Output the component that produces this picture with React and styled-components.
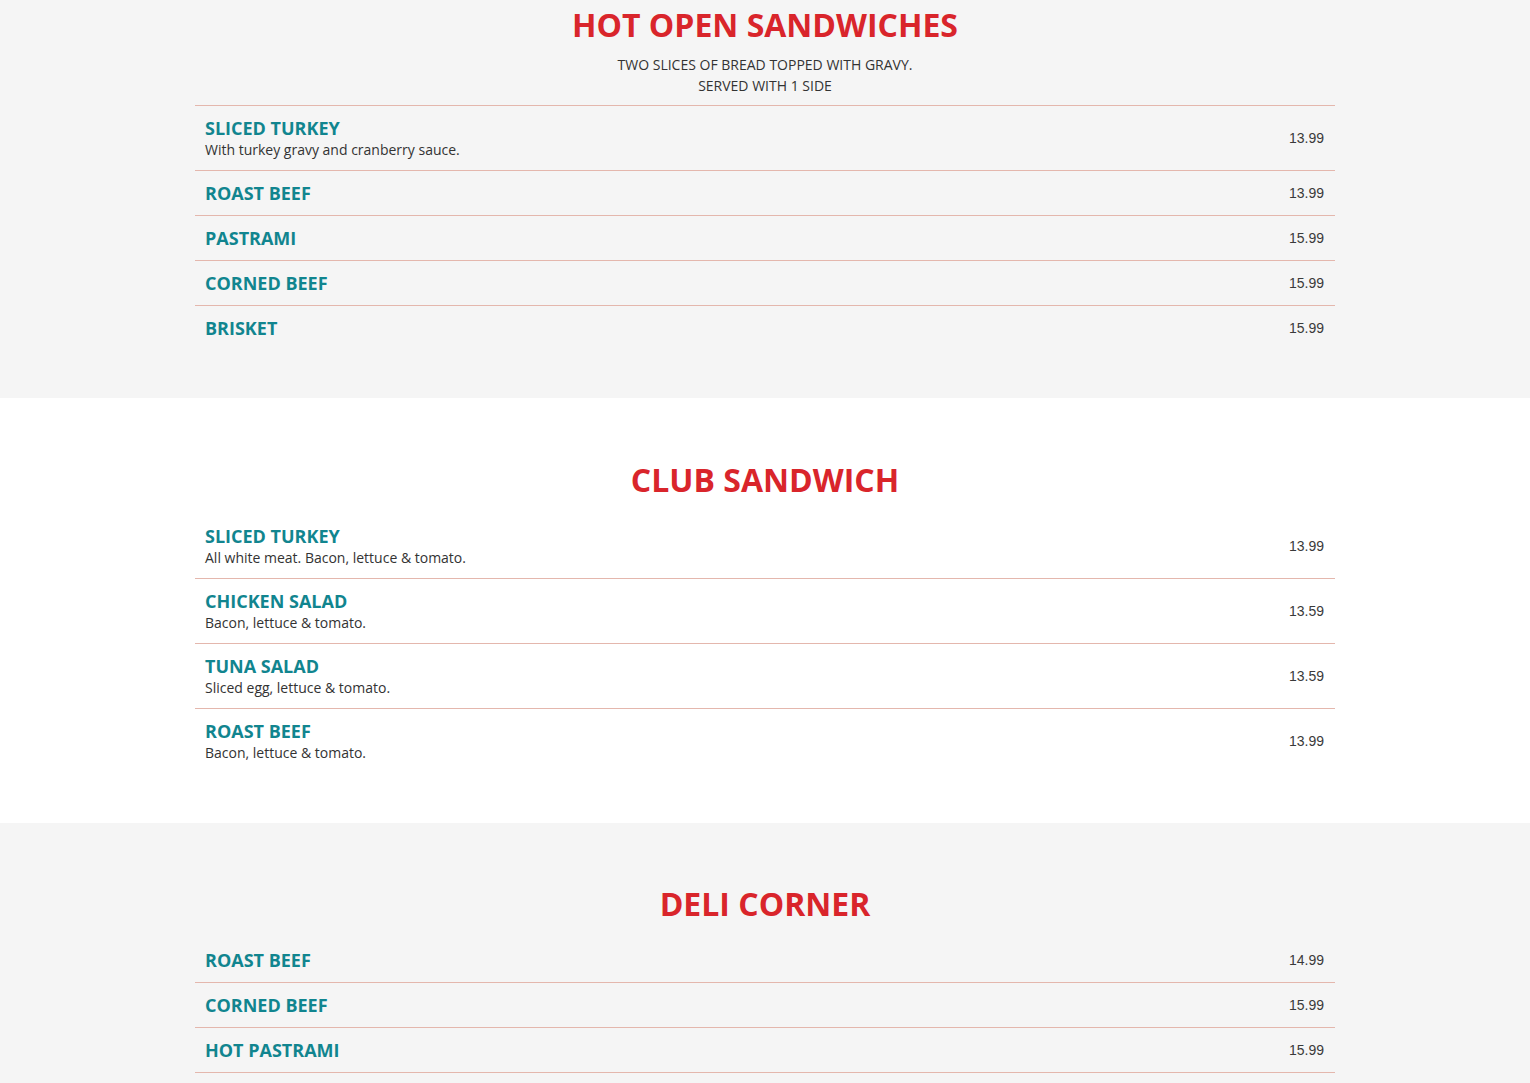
import React from "react";
import styled, { createGlobalStyle } from "styled-components";

const Global = createGlobalStyle`
  html, body { margin: 0; padding: 0; background: #ffffff; }
  body { font-family: "Open Sans", "Liberation Sans", sans-serif; color: #333; }
  * { box-sizing: border-box; }
`;

const Section = styled.section`
  background: ${(p) => (p.$alt ? "#f5f5f5" : "#ffffff")};
  padding: ${(p) => p.$top}px 0 ${(p) => p.$bottom}px;
`;

const Container = styled.div`
  width: 1140px;
  margin: 0 auto;
`;

const Title = styled.h2`
  margin: 0 0 ${(p) => (p.$hasSub ? 11 : 16)}px;
  font-family: "Open Sans", sans-serif;
  font-weight: 700;
  font-size: 32px;
  line-height: 36px;
  color: #d9252b;
  text-align: center;
  text-transform: uppercase;
`;

const Subtitle = styled.div`
  font-size: 14px;
  line-height: 21px;
  text-align: center;
  text-transform: uppercase;
  color: #333;
  padding-bottom: 9px;
  border-bottom: 1px solid #e4b7ad;
`;

const List = styled.ul`
  list-style: none;
  margin: 0;
  padding: 0;
`;

const Item = styled.li`
  display: flex;
  align-items: center;
  justify-content: space-between;
  padding: 10px 11px 10px 10px;
  border-bottom: 1px solid #e4b7ad;
  &:last-child { border-bottom: none; }
`;

const Info = styled.div`
  display: flex;
  flex-direction: column;
`;

const Name = styled.div`
  font-weight: 700;
  font-size: 18px;
  line-height: 24px;
  color: #11858f;
  text-transform: uppercase;
`;

const Desc = styled.div`
  font-size: 14px;
  line-height: 20px;
  color: #333;
`;

const Price = styled.div`
  font-family: "Liberation Sans", Arial, sans-serif;
  font-size: 14px;
  color: #3a3a3a;
`;

const sections = [
  {
    title: "Hot Open Sandwiches",
    alt: true,
    top: 7,
    bottom: 48,
    sub: ["Two slices of bread topped with gravy.", "Served with 1 side"],
    items: [
      ["Sliced Turkey", "With turkey gravy and cranberry sauce.", "13.99"],
      ["Roast Beef", null, "13.99"],
      ["Pastrami", null, "15.99"],
      ["Corned Beef", null, "15.99"],
      ["Brisket", null, "15.99"],
    ],
  },
  {
    title: "Club Sandwich",
    alt: false,
    top: 64,
    bottom: 50,
    items: [
      ["Sliced Turkey", "All white meat. Bacon, lettuce & tomato.", "13.99"],
      ["Chicken Salad", "Bacon, lettuce & tomato.", "13.59"],
      ["Tuna Salad", "Sliced egg, lettuce & tomato.", "13.59"],
      ["Roast Beef", "Bacon, lettuce & tomato.", "13.99"],
    ],
  },
  {
    title: "Deli Corner",
    alt: true,
    top: 63,
    bottom: 50,
    items: [
      ["Roast Beef", null, "14.99"],
      ["Corned Beef", null, "15.99"],
      ["Hot Pastrami", null, "15.99"],
      ["Turkey Breast", null, "14.99"],
      ["Brisket", null, "15.99"],
    ],
  },
];

export default function App() {
  return (
    <>
      <Global />
      {sections.map((s) => (
        <Section key={s.title} $alt={s.alt} $top={s.top} $bottom={s.bottom}>
          <Container>
            <Title $hasSub={!!s.sub}>{s.title}</Title>
            {s.sub && (
              <Subtitle>
                {s.sub[0]}
                <br />
                {s.sub[1]}
              </Subtitle>
            )}
            <List>
              {s.items.map(([name, desc, price], i) => (
                <Item key={i}>
                  <Info>
                    <Name>{name}</Name>
                    {desc && <Desc>{desc}</Desc>}
                  </Info>
                  <Price>{price}</Price>
                </Item>
              ))}
            </List>
          </Container>
        </Section>
      ))}
    </>
  );
}
